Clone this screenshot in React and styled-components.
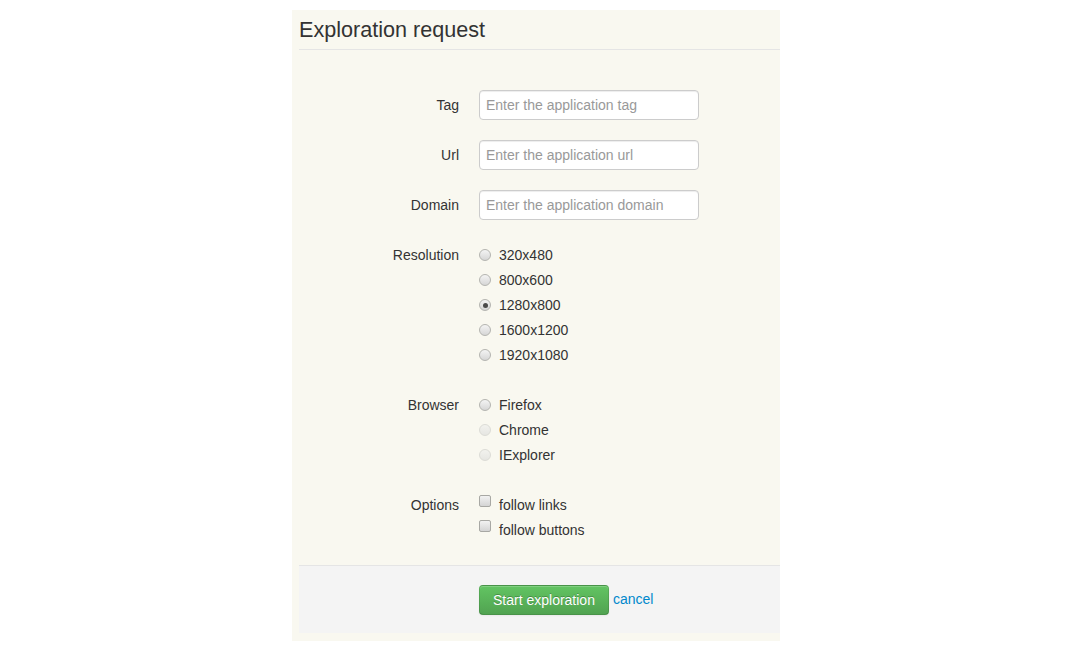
import React from 'react'
import styled, { createGlobalStyle } from 'styled-components'

const GlobalStyle = createGlobalStyle`
  body {
    margin: 0;
    background: #fff;
    font-family: 'Liberation Sans', Arial, sans-serif;
    font-size: 14px;
    line-height: 20px;
    color: #333;
  }
`

const Panel = styled.form`
  width: 481px;
  margin: 10px auto 0;
  padding: 0 0 8px 7px;
  background: #f9f8f0;
`

const Legend = styled.div`
  font-size: 21.6px;
  line-height: 39px;
  color: #333;
  border-bottom: 1px solid #e5e5e5;
`

const Fields = styled.div`
  padding-top: 40px;
`

const ControlGroup = styled.div`
  display: grid;
  grid-template-columns: 160px 1fr;
  column-gap: 20px;
  margin-bottom: 20px;
`

const Label = styled.label`
  padding-top: 5px;
  text-align: right;
`

const Controls = styled.div`
  padding-top: ${(p) => (p.$list ? '5px' : '0')};
`

const TextInput = styled.input`
  box-sizing: border-box;
  width: 220px;
  height: 30px;
  padding: 4px 6px;
  border: 1px solid #ccc;
  border-radius: 4px;
  background: #fff;
  box-shadow: inset 0 1px 1px rgba(0, 0, 0, 0.075);
  font: inherit;
  color: #555;
  outline: none;

  &::placeholder {
    color: #999;
  }
`

const Choice = styled.label`
  display: flex;
  align-items: flex-start;
  gap: 8px;
  line-height: 20px;
  margin-bottom: 5px;
  color: #333;
`

const Radio = styled.input.attrs({ type: 'radio' })`
  appearance: none;
  box-sizing: border-box;
  width: 12px;
  height: 12px;
  margin: 4px 0 0;
  border-radius: 50%;
  border: 1px solid ${(p) => (p.disabled ? '#dcdcd6' : '#b4b4b0')};
  background: ${(p) =>
    p.disabled
      ? 'linear-gradient(#f2f2ee, #e6e6e2)'
      : 'linear-gradient(#f4f4f4, #d6d6d6)'};
  flex: none;
  position: relative;

  &:checked::after {
    content: '';
    position: absolute;
    left: 2.5px;
    top: 2.5px;
    width: 5px;
    height: 5px;
    border-radius: 50%;
    background: #4a4a4a;
  }
`

const Checkbox = styled.input.attrs({ type: 'checkbox' })`
  appearance: none;
  box-sizing: border-box;
  width: 12px;
  height: 12px;
  margin: 0;
  border-radius: 2px;
  border: 1px solid #a8a8a4;
  background: linear-gradient(#f2f2f2, #d4d4d4);
  flex: none;
`

const Actions = styled.div`
  padding: 19px 0 18px 180px;
  border-top: 1px solid #e5e5e5;
  background: #f4f4f4;
  display: flex;
  align-items: center;
  gap: 4px;
`

const Button = styled.button`
  height: 30px;
  padding: 4px 13px;
  font: inherit;
  line-height: 20px;
  color: #fff;
  text-shadow: 0 -1px 0 rgba(0, 0, 0, 0.25);
  background: linear-gradient(#62c462, #51a351);
  border: 1px solid rgba(0, 0, 0, 0.1);
  border-bottom-color: rgba(0, 0, 0, 0.25);
  border-radius: 4px;
  box-shadow: inset 0 1px 0 rgba(255, 255, 255, 0.2), 0 1px 2px rgba(0, 0, 0, 0.05);
`

const CancelLink = styled.a`
  color: #0088cc;
  text-decoration: none;
  margin-top: -2px;
`

const resolutions = ['320x480', '800x600', '1280x800', '1600x1200', '1920x1080']
const browsers = [
  { name: 'Firefox', disabled: false },
  { name: 'Chrome', disabled: true },
  { name: 'IExplorer', disabled: true },
]

const App = () => {
  return (
    <>
      <GlobalStyle />
      <Panel onSubmit={(e) => e.preventDefault()}>
        <Legend>Exploration request</Legend>
        <Fields>
          <ControlGroup>
            <Label>Tag</Label>
            <Controls>
              <TextInput placeholder='Enter the application tag' />
            </Controls>
          </ControlGroup>
          <ControlGroup>
            <Label>Url</Label>
            <Controls>
              <TextInput placeholder='Enter the application url' />
            </Controls>
          </ControlGroup>
          <ControlGroup>
            <Label>Domain</Label>
            <Controls>
              <TextInput placeholder='Enter the application domain' />
            </Controls>
          </ControlGroup>
          <ControlGroup>
            <Label>Resolution</Label>
            <Controls $list>
              {resolutions.map((r) => (
                <Choice key={r}>
                  <Radio name='resolution' defaultChecked={r === '1280x800'} />
                  {r}
                </Choice>
              ))}
            </Controls>
          </ControlGroup>
          <ControlGroup>
            <Label>Browser</Label>
            <Controls $list>
              {browsers.map((b) => (
                <Choice key={b.name}>
                  <Radio name='browser' disabled={b.disabled} />
                  {b.name}
                </Choice>
              ))}
            </Controls>
          </ControlGroup>
          <ControlGroup>
            <Label>Options</Label>
            <Controls $list>
              <Choice>
                <Checkbox />
                follow links
              </Choice>
              <Choice>
                <Checkbox />
                follow buttons
              </Choice>
            </Controls>
          </ControlGroup>
        </Fields>
        <Actions>
          <Button type='submit'>Start exploration</Button>
          <CancelLink href='#'>cancel</CancelLink>
        </Actions>
      </Panel>
    </>
  )
}

export default App
